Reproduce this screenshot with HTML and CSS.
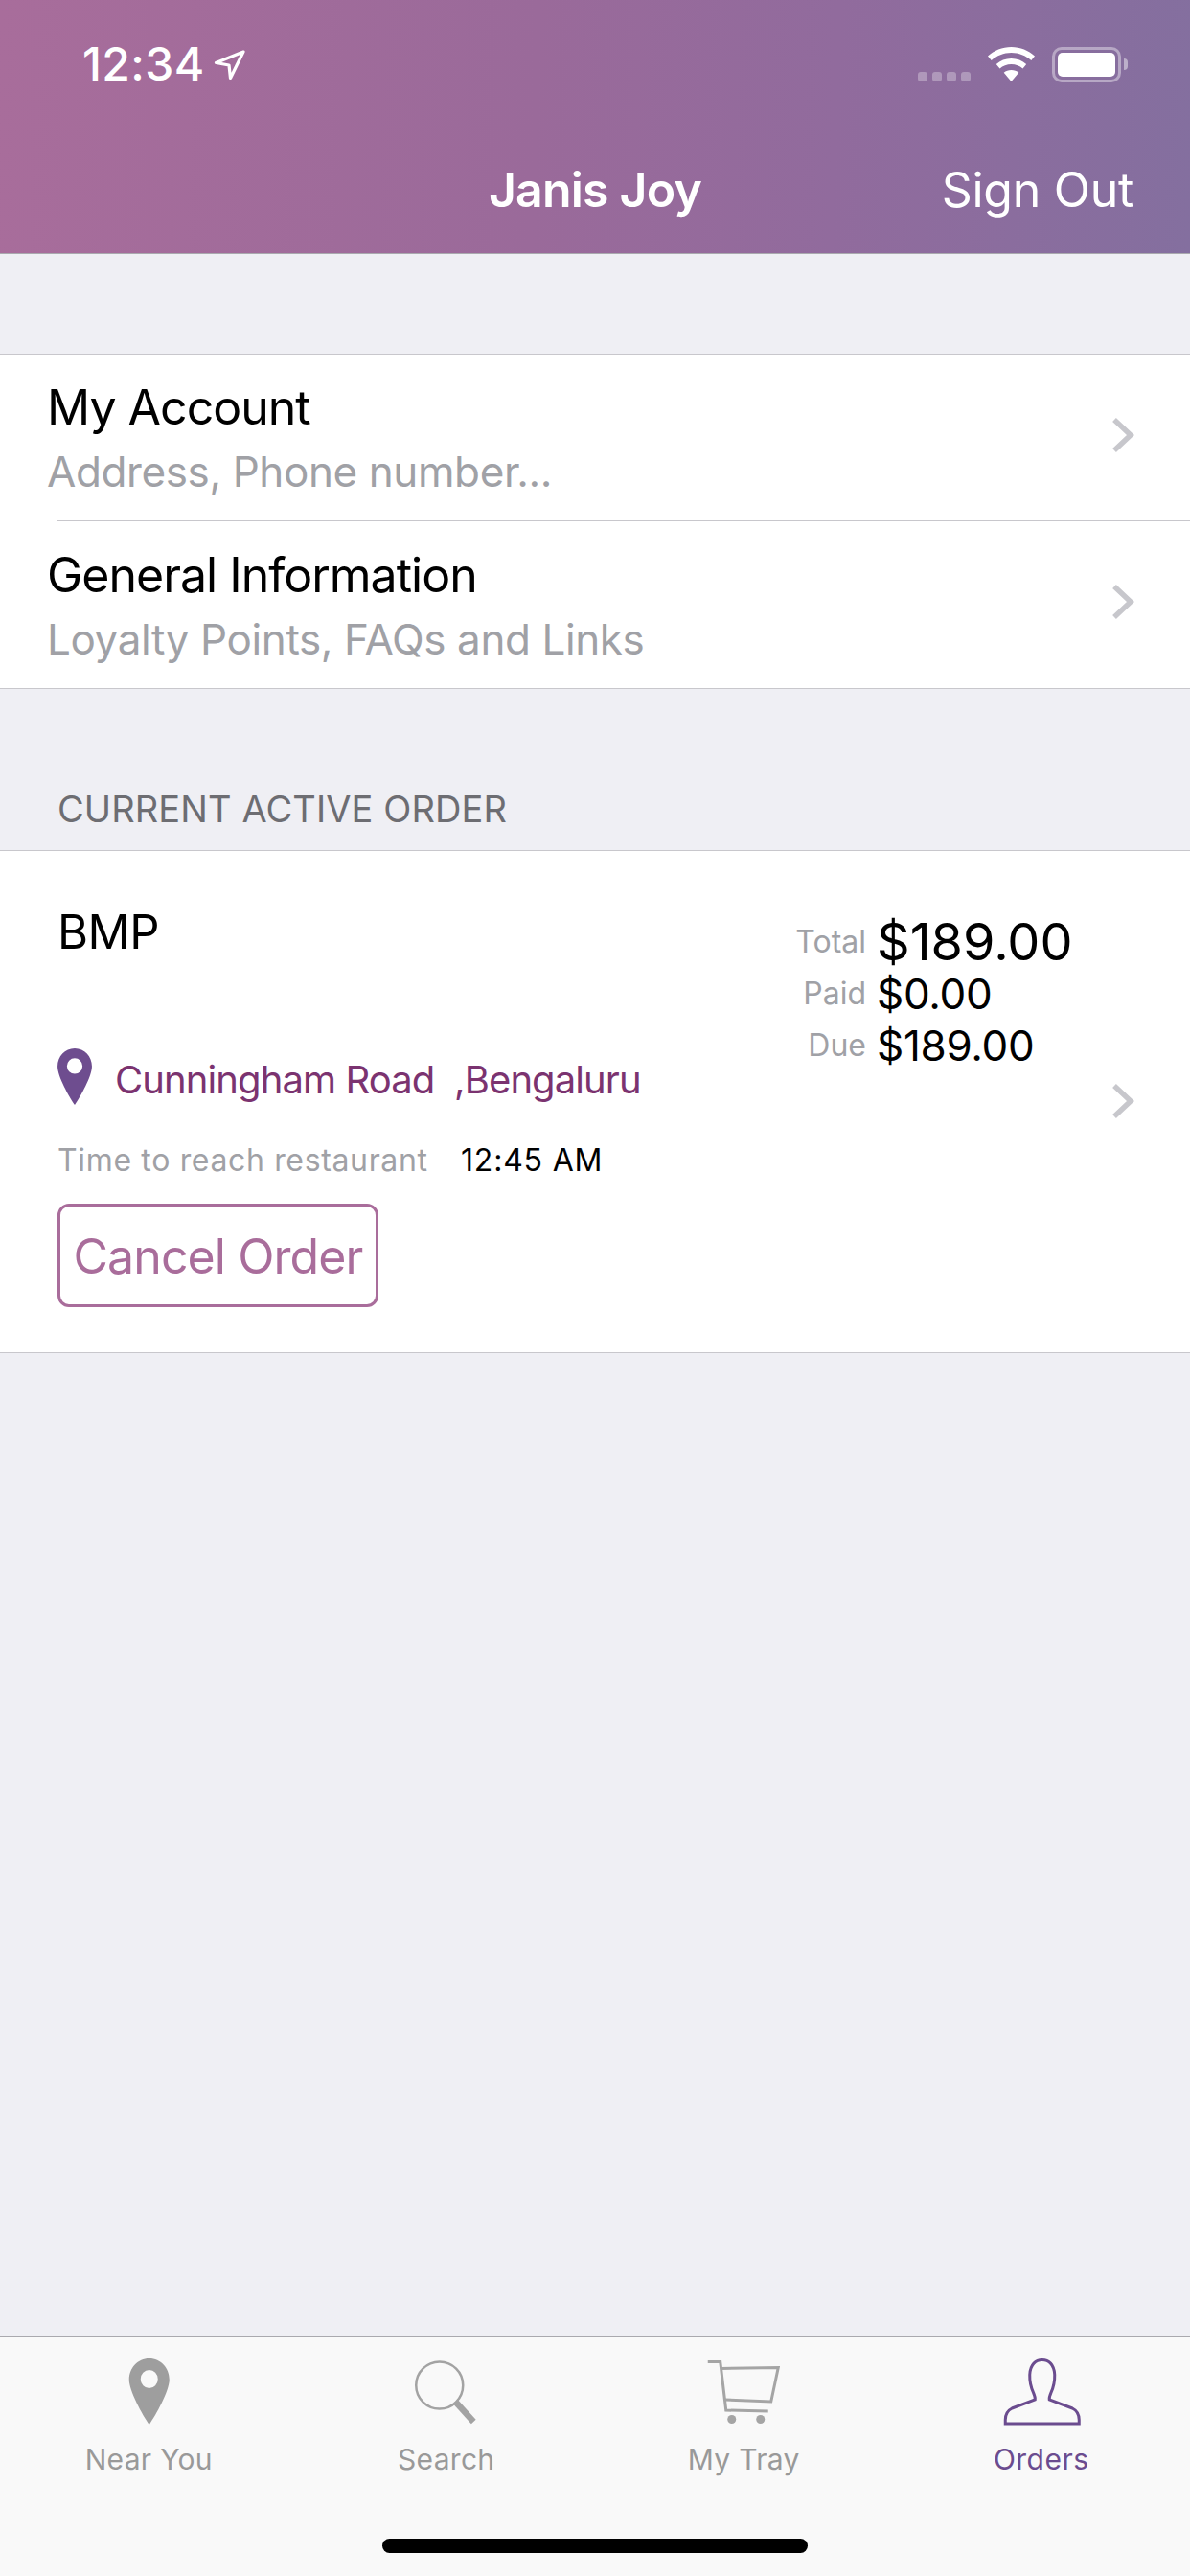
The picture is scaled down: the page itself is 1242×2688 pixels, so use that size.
FILE: index.html
```html
<!DOCTYPE html>
<html lang="en">
<head>
<meta charset="utf-8">
<title>Janis Joy</title>
<link rel="stylesheet" href="styles.css">
</head>
<body>
<div class="app">
  <header class="header">
    <div class="status">
      <div class="status-left">
        <span class="clock">12:34</span>
        <svg class="loc-arrow" viewBox="224 52 33 32"><path d="M255 54 L226.500 65.500 L240 68 L241.500 81.500 Z" fill="none" stroke="#fff" stroke-width="3.200" stroke-linejoin="round"/></svg>
      </div>
      <div class="status-right">
        <div class="signal"><i></i><i></i><i></i><i></i></div>
        <svg class="wifi" viewBox="0 0 49 36"><path fill="#fff" d="M24.500 0C15 0 6.500 3.600 0 9.500L3.700 14C9.300 9 16.500 6 24.500 6S39.700 9 45.300 14L49 9.500C42.500 3.600 34 0 24.500 0Z"/><path fill="#fff" d="M24.500 12C18.500 12 13 14.200 8.800 18L12.500 22.500C15.700 19.700 19.900 18 24.500 18S33.300 19.700 36.500 22.500L40.200 18C36 14.200 30.500 12 24.500 12Z"/><path fill="#fff" d="M24.500 24C21.500 24 18.800 25 16.700 26.800L24.500 36L32.300 26.800C30.200 25 27.500 24 24.500 24Z"/></svg>
        <div class="battery"><div class="battery-fill"></div></div>
        <div class="battery-nub"></div>
      </div>
    </div>
    <nav class="navbar">
      <span></span>
      <span class="nav-title">Janis Joy</span>
      <span class="nav-action">Sign Out</span>
    </nav>
  </header>

  <main class="main">
    <section class="list">
      <div class="row">
        <div class="row-text">
          <div class="row-title">My Account</div>
          <div class="row-sub">Address, Phone number...</div>
        </div>
        <svg class="chevron" viewBox="0 0 24 38"><path d="M3 3 L20 19 L3 35" fill="none" stroke="#c7c7cc" stroke-width="5.500"/></svg>
      </div>
      <div class="divider"></div>
      <div class="row row-last">
        <div class="row-text">
          <div class="row-title">General Information</div>
          <div class="row-sub">Loyalty Points, FAQs and Links</div>
        </div>
        <svg class="chevron" viewBox="0 0 24 38"><path d="M3 3 L20 19 L3 35" fill="none" stroke="#c7c7cc" stroke-width="5.500"/></svg>
      </div>
    </section>

    <h2 class="section-head">CURRENT ACTIVE ORDER</h2>

    <section class="card">
      <div class="card-left">
        <div class="venue">BMP</div>
        <div class="location">
          <svg class="pin" viewBox="135 2461 42 69"><path fill="#6e4d8f" fill-rule="evenodd" d="M156 2461C144 2461 135 2471 135 2483C135 2495 149 2520 156 2530C163 2520 177 2495 177 2483C177 2471 168 2461 156 2461ZM156 2473A9.500 9.500 0 1 1 156 2492A9.500 9.500 0 1 1 156 2473Z"/></svg>
          <span class="location-text">Cunningham Road  ,Bengaluru</span>
        </div>
        <div class="eta"><span class="eta-label">Time to reach restaurant</span><span class="eta-value">12:45 AM</span></div>
        <button class="cancel">Cancel Order</button>
      </div>
      <div class="totals">
        <span class="t-label">Total</span><span class="t-value t-big">$189.00</span>
        <span class="t-label">Paid</span><span class="t-value">$0.00</span>
        <span class="t-label">Due</span><span class="t-value">$189.00</span>
      </div>
      <svg class="chevron" viewBox="0 0 24 38"><path d="M3 3 L20 19 L3 35" fill="none" stroke="#c7c7cc" stroke-width="5.500"/></svg>
    </section>
  </main>

  <footer class="tabbar">
    <div class="tabs">
      <div class="tab">
        <svg class="tab-icon" viewBox="110.250 2461 90 70"><path fill="#9e9e9e" fill-rule="evenodd" d="M156 2461C144 2461 135 2471 135 2483C135 2495 149 2520 156 2530C163 2520 177 2495 177 2483C177 2471 168 2461 156 2461ZM156 2473A9 9.500 0 1 1 156 2492A9 9.500 0 1 1 156 2473Z"/></svg>
        <span class="tab-label">Near You</span>
      </div>
      <div class="tab">
        <svg class="tab-icon" viewBox="420.750 2461 90 70"><circle cx="458.500" cy="2489" r="24.500" fill="none" stroke="#a3a3a3" stroke-width="2.500"/><path d="M475 2506 L494 2527" stroke="#a3a3a3" stroke-width="6.500" fill="none"/></svg>
        <span class="tab-label">Search</span>
      </div>
      <div class="tab">
        <svg class="tab-icon" viewBox="731.250 2461 90 70"><path d="M739 2464.500H752L758 2515L802 2516" fill="none" stroke="#a5a5a5" stroke-width="3"/><path d="M753 2471.500L812.500 2470.500L805 2506L757 2504" fill="none" stroke="#a5a5a5" stroke-width="3"/><circle cx="764" cy="2524.500" r="4.500" fill="#a5a5a5"/><circle cx="794" cy="2524.500" r="4.500" fill="#a5a5a5"/></svg>
        <span class="tab-label">My Tray</span>
      </div>
      <div class="tab tab-active">
        <svg class="tab-icon" viewBox="1041.750 2461 90 70"><path d="M1049 2529V2525C1049 2519 1052 2515 1056 2513L1080 2504C1081 2498 1074 2494 1074.500 2478C1075 2467 1081 2462.500 1087.500 2462.500C1094 2462.500 1100 2467 1100.500 2478C1101 2494 1094 2498 1095 2504L1119 2513C1123 2515 1126 2519 1126 2525V2529Z" fill="none" stroke="#6b4c8f" stroke-width="3"/></svg>
        <span class="tab-label">Orders</span>
      </div>
    </div>
    <div class="home-indicator"></div>
  </footer>
</div>
</body>
</html>
```
FILE: styles.css
```css
* { box-sizing: border-box; margin: 0; padding: 0; }
html, body { width: 1242px; height: 2688px; overflow: hidden; }
body { font-family: Inter, "Liberation Sans", sans-serif; background: #efeff4; color: #000; }
.app { width: 1242px; height: 2688px; display: flex; flex-direction: column; }

.header { height: 265px; background: linear-gradient(92deg, #a86d9b 0%, #9a6a9a 45%, #916b9d 70%, #846f9f 100%); border-bottom: 1px solid #a9a9ae; color: #fff; flex: none; }
.status { height: 135px; display: flex; justify-content: space-between; padding: 49px 65px 0 86px; }
.status-left { display: flex; align-items: flex-start; }
.clock { font-size: 48px; line-height: 36px; font-weight: 500; letter-spacing: .4px; }
.loc-arrow { width: 33px; height: 32px; margin: 3px 0 0 9px; }
.status-right { display: flex; align-items: flex-start; }
.signal { display: flex; gap: 5px; margin: 26px 18px 0 0; }
.signal i { width: 10px; height: 10px; border-radius: 3px; background: rgba(255,255,255,.3); display: block; }
.wifi { width: 49px; height: 36px; margin-right: 18px; }
.battery { width: 72px; height: 37px; border: 3px solid rgba(255,255,255,.4); border-radius: 10px; padding: 3px; }
.battery-fill { width: 100%; height: 100%; background: #fff; border-radius: 5px; }
.battery-nub { width: 4px; height: 12px; margin: 12px 0 0 3px; background: rgba(255,255,255,.45); border-radius: 0 6px 6px 0; }

.navbar { display: grid; grid-template-columns: 1fr auto 1fr; padding: 33px 59px 0; line-height: 60px; font-size: 50px; }
.nav-title { font-weight: 600; letter-spacing: -.8px; }
.nav-action { text-align: right; font-weight: 400; letter-spacing: -.3px; }

.main { flex: 1; padding-top: 104px; }
.list { background: #fff; border-top: 1px solid #c8c7cc; border-bottom: 1px solid #c8c7cc; }
.row { height: 173px; display: flex; align-items: flex-start; padding-right: 58px; }
.row-last { height: 174px; }
.row-text { flex: 1; padding: 25px 0 0 49px; }
.row-last .row-text { padding-top: 26px; }
.row-title { font-size: 50px; line-height: 60px; letter-spacing: -1px; }
.row-sub { font-size: 44px; line-height: 60px; margin-top: 7px; color: #a0a1a6; letter-spacing: -.4px; }
.divider { height: 1px; margin-left: 60px; background: #c8c7cc; }
.chevron { width: 24px; height: 38px; flex: none; }
.row .chevron { margin-top: 65px; }

.section-head { height: 168px; padding: 103px 0 0 60px; font-size: 38px; line-height: 44px; font-weight: 400; color: #6d6d72; letter-spacing: .1px; }

.card { height: 525px; background: #fff; border-top: 1px solid #c8c7cc; border-bottom: 1px solid #c8c7cc; display: flex; align-items: center; }
.card > .chevron { margin-top: -2px; }
.card-left { flex: 0 0 700px; align-self: flex-start; padding: 55px 0 0 60px; }
.venue { font-size: 49px; line-height: 60px; letter-spacing: -.5px; }
.location { display: flex; margin-top: 91px; height: 59px; }
.pin { width: 36px; height: 59px; flex: none; }
.location-text { margin: 3px 0 0 24px; font-size: 40px; line-height: 59px; color: #7b3370; white-space: pre; letter-spacing: -.9px; }
.eta { margin-top: 38px; font-size: 32px; line-height: 40px; display: flex; }
.eta-label { color: #a0a1a6; width: 421px; letter-spacing: .65px; }
.eta-value { color: #000; letter-spacing: .8px; }
.cancel { display: block; margin-top: 25px; width: 335px; height: 108px; padding-top: 2px; background: #fff; border: 3px solid #a96d9b; border-radius: 12px; font: 400 50px/60px Inter, sans-serif; color: #a96d9b; letter-spacing: -.9px; }

.totals { flex: 0 0 460px; align-self: flex-start; margin-top: 68px; display: grid; grid-template-columns: 204px 1fr; column-gap: 11px; grid-auto-rows: 54px; }
.t-label { font-size: 32px; line-height: 54px; color: #a0a1a6; text-align: right; }
.t-value { font-size: 44px; line-height: 54px; letter-spacing: -.3px; }
.t-big { font-size: 54px; letter-spacing: 0; }

.tabbar { height: 250px; flex: none; background: #f9f9f9; border-top: 1px solid #a9a9ae; display: flex; flex-direction: column; }
.tabs { display: grid; grid-template-columns: repeat(4, 1fr); padding-top: 22px; }
.tab { display: flex; flex-direction: column; align-items: center; }
.tab-icon { width: 90px; height: 70px; display: block; }
.tab-label { font-size: 30px; line-height: 40px; margin-top: 15px; color: #999; letter-spacing: .3px; }
.tab-active .tab-label { color: #6b4c8f; letter-spacing: .5px; }
.home-indicator { width: 444px; height: 15px; border-radius: 8px; background: #000; margin: 63px auto 0; }
```
